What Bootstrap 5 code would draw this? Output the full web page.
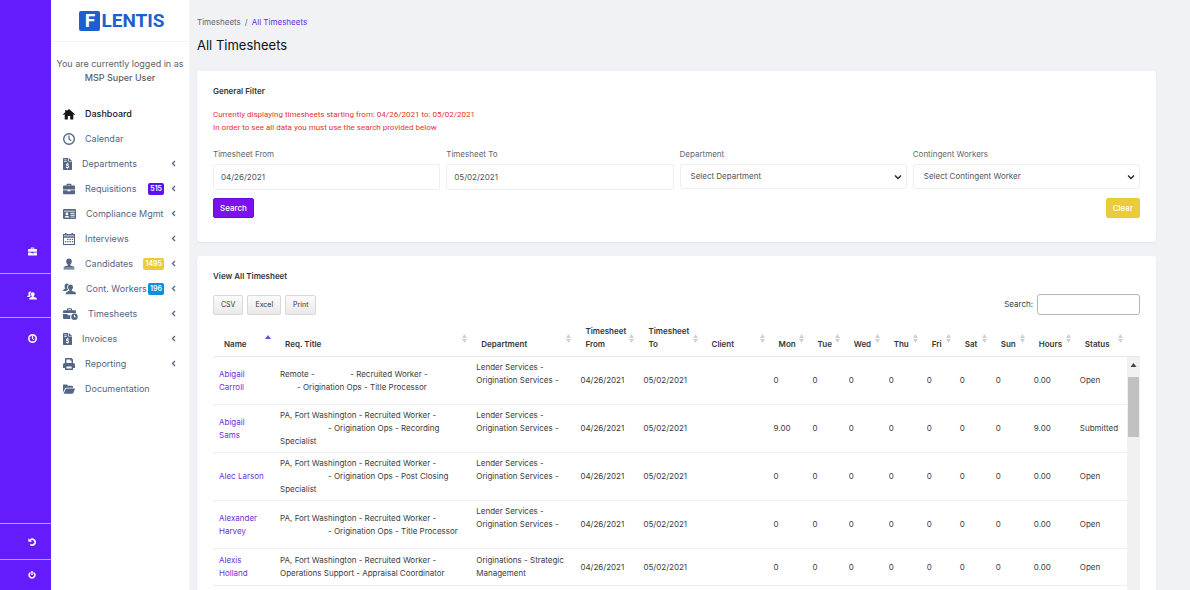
<!DOCTYPE html>
<html lang="en">
<head>
<meta charset="utf-8">
<meta name="viewport" content="width=device-width, initial-scale=1">
<title>All Timesheets - Flentis</title>
<link rel="stylesheet" href="https://cdn.jsdelivr.net/npm/bootstrap@5.3.0/dist/css/bootstrap.min.css">
<style>
  :root { --violet: #641cfc; --slate: #556684; --canvas: #f0f2f6; --rule: #eceef0; }
  body { font-family: Inter, Roboto, sans-serif; font-size: 8px; line-height: 13px; color: #3c4043; background: var(--canvas); }
  a { text-decoration: none; }
  svg { display: block; fill: currentColor; flex: none; }

  /* Narrow icon rail */
  .rail { width: 51px; background: var(--violet); padding-top: 39vh; }
  .rail a { height: 44px; padding-left: 13px; color: #fdf6ff; border-bottom: 1px solid #b79bff; }
  .rail .rail-last { height: 40px; border-bottom: 0; }
  .rail .rail-end { border-top: 1px solid #b79bff; }
  .rail .rail-end a { height: 36px; }
  .rail .rail-end a:last-child { height: 30px; border-bottom: 0; }

  /* Main menu */
  .sidebar { width: 138px; background: #fff; }
  .logo { height: 42px; padding-left: 4px; border-bottom: 1px solid #f1f3f7; color: #1c5fd0; font-family: Roboto, sans-serif; font-size: 19px; line-height: 20px; font-weight: 700; }
  .logo-box { width: 21px; height: 20px; border-radius: 2px; background: #1c5fd0; color: #fff; margin-right: 1px; }
  .whoami { font-size: 9px; line-height: 14px; padding-top: 15px; color: #5d6168; }
  .whoami strong { font-weight: 500; }
  .menu a { height: 25px; padding: 0 13px 0 12px; font-size: 9px; color: var(--slate); white-space: nowrap; }
  .menu a > svg:first-child { margin-right: 10px; }
  .menu a.current { color: #15171a; font-weight: 500; }
  .menu .chev { width: 5px; height: 7px; }
  .count { font-size: 7px; line-height: 12px; padding: 0 2px; border-radius: 2px; color: #fff; font-weight: 600; margin: 0 7px 0 auto; }
  .count-violet { background: #5b12ee; }
  .count-gold { background: #eccb3a; }
  .count-blue { background: #0a8fd8; }

  /* Page */
  .page { padding: 16px 34px 0 8px; }
  .crumbs { --bs-breadcrumb-margin-bottom: 0; --bs-breadcrumb-item-padding-x: 4px; --bs-breadcrumb-font-size: 8px; color: #63676d; }
  .crumbs a { color: #6a2bd9; }
  .page-title { font-size: 13px; line-height: 20px; font-weight: 400; color: #111; margin: 6px 0 16px; }
  .panel { background: #fff; border-radius: 3px; box-shadow: 0 1px 2px #dfe3ea; padding: 14px 16px; margin-bottom: 14px; }
  .panel h2 { font-size: 8px; line-height: 13px; font-weight: 600; color: #34373b; margin: 0; }
  .notice { font-family: Roboto, sans-serif; color: #e8322f; margin: 10px 0 14px; }
  .filters { --bs-gutter-x: 6px; }
  .filters label { margin-bottom: 3px; color: #63676d; }
  .filters .form-control, .filters .form-select { font-size: 8px; line-height: 13px; color: #50555b; border-color: #eceef1; border-radius: 2px; padding: 0 7px; height: 26px; }
  .filters .form-select { height: 25px; padding-left: 10px; border-radius: 3px; background-position: right 4px center; background-size: 8px 8px;
    background-image: url("data:image/svg+xml,%3csvg xmlns='http://www.w3.org/2000/svg' viewBox='0 0 8 8'%3e%3cpath fill='none' stroke='%23222' stroke-width='1.3' d='M1 2.5l3 3 3-3'/%3e%3c/svg%3e"); }
  .form-end { padding-bottom: 10px; }
  .act { font-size: 8px; line-height: 18px; padding: 0 6px; border-radius: 2px; font-weight: 500; color: #fff; }
  .act-go { background: #7a12ee; border-color: #6a0bd8; }
  .act-clear { background: #eccb3a; border-color: #eccb3a; }
  .tools { margin-top: 11px; }
  .export { font-size: 7px; line-height: 18px; padding: 0 7px; border-radius: 2px; border-color: #d8d8d8; color: #333; background: linear-gradient(#fbfbfb, #e9e9e9); }
  .lookup input { width: 103px; height: 21px; padding: 0 5px; font-size: 8px; border: 1px solid #b4b6b8; border-radius: 3px; }

  /* Timesheet grid */
  .grid-head { margin-top: 10px; padding-right: 13px; border-bottom: 1px solid #e6e8eb; }
  .grid-body { min-height: 300px; }
  .sheet { width: 100%; table-layout: fixed; }
  .sheet th { position: relative; vertical-align: bottom; font-weight: 600; color: #34373b; padding: 0 0 5px 10px; }
  .sheet th:first-child { padding-left: 11px; }
  .sheet th svg { position: absolute; right: 4px; bottom: 13px; color: #cfd2d8; }
  .sheet th svg.asc { color: #5a55d6; bottom: 17px; }
  .sheet td { height: 37px; padding: 4px 0 4px 5px; vertical-align: middle; border-bottom: 1px solid var(--rule); color: #393d42; white-space: nowrap; }
  .sheet td:first-child { padding-left: 6px; white-space: normal; }
  .sheet td a { color: #6d2fd8; }
  .gap-a { display: inline-block; width: 31px; }
  .gap-b { display: inline-block; width: 17px; }
  .gap-c { display: inline-block; width: 48px; }
  .track { width: 13px; flex: none; background: #f1f1f1; }
  .track svg { margin: 6px auto 10px; color: #444; }
  .thumb { height: 60px; margin: 0 1px; background: #c1c1c1; }
  .c-name { width: 62px } .c-req { width: 196px } .c-dept { width: 104px } .c-date { width: 63px } .c-client { width: 67px }
  .c-d1 { width: 39px } .c-d2 { width: 36px } .c-d3 { width: 40px } .c-d4 { width: 38px } .c-d5 { width: 33px }
  .c-hours { width: 46px } .c-status { width: 52px }
</style>
</head>
<body>
<svg class="d-none" aria-hidden="true">
  <symbol id="i-case" viewBox="0 0 12 12"><path d="M3.600 2.600V1.400Q3.600.8 4.200.8h3.600q.6 0 .6.6v1.200H11q1 0 1 1V6.400H0V3.600q0-1 1-1zM4.800 1.900v.7h2.400v-.7zM0 7.200h4.500v1h3v-1H12v3.300q0 .8-.8.800H.8q-.8 0-.8-.8z"/></symbol>
  <symbol id="i-clock" viewBox="0 0 12 12"><path fill-rule="evenodd" d="M6 0a6 6 0 1 1 0 12A6 6 0 0 1 6 0zm0 1.400a4.600 4.600 0 1 0 0 9.200 4.600 4.600 0 0 0 0-9.200zM5.400 2.600h1.200v3l1.900 1.900-.8.8-2.300-2.200z"/></symbol>
  <symbol id="i-clock-bold" viewBox="0 0 12 12"><path fill-rule="evenodd" d="M6 0a6 6 0 1 1 0 12A6 6 0 0 1 6 0zm0 2.200a3.800 3.800 0 1 0 0 7.600 3.800 3.800 0 0 0 0-7.600zM5.200 2.800h1.600v2.700l1.700 1.700-1.100 1.100-2.200-2.200z"/></symbol>
  <symbol id="i-home" viewBox="0 0 12 12"><path d="M6 1l6 5.200-.8.9-.9-.8v5.200H7.200V8H4.800v3.500H1.700V6.300l-.9.8L0 6.200 2.200 4.300V2h1.500v1z"/></symbol>
  <symbol id="i-file" viewBox="0 0 9 12"><path fill-rule="evenodd" d="M.7 0H5.300v3.600H9v7.700q0 .7-.7.700H.7Q0 12 0 11.300V.7Q0 0 .7 0zM6 0l3 3H6zM1.200 1.500v.7h2.500v-.7zM1.200 3v.7h2.500V3zM4.200 4.800v.7q-1.400.2-1.300 1.400.1.900 1.900 1.300.5.400 0 .7-.7.200-1.400-.3l-.6.800q.7.500 1.400.5v.8h.8v-.8q1.400-.3 1.200-1.500-.2-.8-1.900-1.300-.4-.4.100-.6.500-.1 1.200.3l.5-.8q-.6-.4-1.100-.5v-.7z"/></symbol>
  <symbol id="i-card" viewBox="0 0 13 12"><path fill-rule="evenodd" d="M1 1h11q1 0 1 1v8q0 1-1 1H1q-1 0-1-1V2q0-1 1-1zm0 1.800v.7h11v-.7zM3.900 4.500a1.400 1.400 0 1 0 0 2.800 1.400 1.400 0 0 0 0-2.800zM1.500 9.600h4.800Q6.200 8 4.800 8H3.100Q1.600 8 1.500 9.600zM7.500 4.800v1h4.200v-1zm0 2v1h4.200v-1zm0 1.900v.9h4.200v-.9z"/></symbol>
  <symbol id="i-cal" viewBox="0 0 12 12"><path fill-rule="evenodd" d="M0 1h2V0h1.500v1h5V0H10v1h2v11H0zm1 3.800V11h10V4.800zM1 2.500v.8h10v-.8zM4.200 5.700h1.300V7H4.200zm2.300 0h1.300V7H6.500zm2.300 0h1.300V7H8.800zM2 8h1.300v1.300H2zm2.200 0h1.300v1.300H4.200zm2.300 0h1.300v1.300H6.500zm2.300 0h1.300v1.300H8.800z"/></symbol>
  <symbol id="i-user" viewBox="0 0 12 12"><path d="M6 .5c1.900 0 2.800 1.200 2.800 2.900 0 1.400-.7 2.500-1.500 3.100v.9l3.300 1.100q.8.400.8 1.300H.6q0-.9.8-1.300l3.300-1.100v-.9C3.900 5.900 3.200 4.800 3.200 3.400 3.200 1.700 4.100.5 6 .5zM.6 10.300h10.800v1.200H.6z"/></symbol>
  <symbol id="i-users" viewBox="0 0 13 12"><path d="M7.500 1.500c1.700 0 2.500 1.100 2.500 2.600 0 1.300-.6 2.200-1.300 2.800v.9l3.300 1.200q1 .5 1 1.700v.6H2.700v-.8q0-1 1-1.500l2.600-1.200v-.9C5.600 6.300 5 5.400 5 4.100c0-1.500.8-2.600 2.500-2.600zM4 .5q1.300 0 1.900.8C4.400 2 4 3.200 4.200 4.500c0 .9.400 1.700.8 2.200L3.100 8H0q0-1.400.9-1.800l1.500-.7C1.800 5 1.600 4.300 1.600 3.200 1.600 1.500 2.500.5 4 .5z"/></symbol>
  <symbol id="i-time" viewBox="0 0 15 12"><path fill-rule="evenodd" d="M4 2.200V1q0-.8.800-.8h3.400q.8 0 .8.800v1.200h3q1 0 1 1V5H0V3.200q0-1 1-1zM5.200 1.300v.9h2.600v-.9zM0 6h4.500v1.200H7.600Q6.800 8.800 7.500 11H1q-1 0-1-1zM11.500 5.600a3.200 3.200 0 1 1 0 6.400 3.200 3.200 0 0 1 0-6.400zm-.5 1.500v2.200h2v-.8h-1.100V7.100z"/></symbol>
  <symbol id="i-print" viewBox="0 0 12 12"><path fill-rule="evenodd" d="M2.500 0h6L10 1.500V5q2 0 2 1.600V10h-2v2H2V10H0V6.600Q0 5 2 5V.5zM3.400 1.400V5h5.200V2.700H7.400V1.400zM3.400 8.600v2h5.200v-2z"/></symbol>
  <symbol id="i-folder" viewBox="0 0 12 12"><path d="M0 9.500V2.300q0-.8.800-.8h3L5 2.800h4.200q.8 0 .8.800v1.100H3.100q-.7 0-1.100.7zM.5 10.800L2.600 6.200q.3-.6.900-.6h8q.7 0 .4.700L10.300 10q-.3.800-1.100.8z"/></symbol>
  <symbol id="i-undo" viewBox="0 0 12 12"><path d="M.5.5l2 1.800A5.600 5.600 0 1 1 2.600 10.500l1.700-2a3 3 0 1 0 0-4.400L6.200 5.800H.5z"/></symbol>
  <symbol id="i-power" viewBox="0 0 12 12"><path d="M4.900 0h2.200v6H4.900zM3.800 1v2.900a3 3 0 1 0 4.400 0V1a5.500 5.500 0 1 1-4.400 0z"/></symbol>
  <symbol id="i-chev" viewBox="0 0 5 7"><path fill="none" stroke="currentColor" stroke-width="1.300" d="M4 1L1.500 3.500 4 6"/></symbol>
  <symbol id="i-sort" viewBox="0 0 5 9"><path d="M2.500 0L5 4H0zM2.500 9L0 5h5z"/></symbol>
  <symbol id="i-up" viewBox="0 0 6 4"><path d="M3 0l3 4H0z"/></symbol>
</svg>

<div class="d-flex vh-100 overflow-hidden">
  <nav class="rail d-flex flex-column flex-shrink-0" aria-label="Shortcuts">
    <a href="#" class="d-flex align-items-center justify-content-center" aria-label="Requisitions"><svg width="9" height="9"><use href="#i-case"/></svg></a>
    <a href="#" class="d-flex align-items-center justify-content-center" aria-label="Workers"><svg width="10" height="9"><use href="#i-users"/></svg></a>
    <a href="#" class="rail-last d-flex align-items-center justify-content-center" aria-label="Timesheets"><svg width="9" height="9"><use href="#i-clock-bold"/></svg></a>
    <div class="rail-end mt-auto">
      <a href="#" class="d-flex align-items-center justify-content-center" aria-label="History"><svg width="8" height="8"><use href="#i-undo"/></svg></a>
      <a href="#" class="d-flex align-items-center justify-content-center" aria-label="Log out"><svg width="8" height="8"><use href="#i-power"/></svg></a>
    </div>
  </nav>

  <aside class="sidebar flex-shrink-0">
    <a href="#" class="logo d-flex align-items-center justify-content-center" aria-label="Flentis"><span class="logo-box text-center">F</span>LENTIS</a>
    <p class="whoami text-center text-nowrap mb-0">You are currently logged in as<br><strong>MSP Super User</strong></p>
    <nav class="menu mt-3" aria-label="Main">
      <a href="#" class="current d-flex align-items-center"><svg width="12" height="12"><use href="#i-home"/></svg>Dashboard</a>
      <a href="#" class="d-flex align-items-center"><svg width="12" height="12"><use href="#i-clock"/></svg>Calendar</a>
      <a href="#" class="d-flex align-items-center"><svg width="9" height="12"><use href="#i-file"/></svg>Departments<svg class="chev ms-auto"><use href="#i-chev"/></svg></a>
      <a href="#" class="d-flex align-items-center"><svg width="12" height="12"><use href="#i-case"/></svg>Requisitions<span class="count count-violet">515</span><svg class="chev"><use href="#i-chev"/></svg></a>
      <a href="#" class="d-flex align-items-center"><svg width="13" height="12"><use href="#i-card"/></svg>Compliance Mgmt<svg class="chev ms-auto"><use href="#i-chev"/></svg></a>
      <a href="#" class="d-flex align-items-center"><svg width="12" height="12"><use href="#i-cal"/></svg>Interviews<svg class="chev ms-auto"><use href="#i-chev"/></svg></a>
      <a href="#" class="d-flex align-items-center"><svg width="12" height="12"><use href="#i-user"/></svg>Candidates<span class="count count-gold">1495</span><svg class="chev"><use href="#i-chev"/></svg></a>
      <a href="#" class="d-flex align-items-center"><svg width="13" height="12"><use href="#i-users"/></svg>Cont. Workers<span class="count count-blue">196</span><svg class="chev"><use href="#i-chev"/></svg></a>
      <a href="#" class="d-flex align-items-center"><svg width="15" height="12"><use href="#i-time"/></svg>Timesheets<svg class="chev ms-auto"><use href="#i-chev"/></svg></a>
      <a href="#" class="d-flex align-items-center"><svg width="9" height="12"><use href="#i-file"/></svg>Invoices<svg class="chev ms-auto"><use href="#i-chev"/></svg></a>
      <a href="#" class="d-flex align-items-center"><svg width="12" height="12"><use href="#i-print"/></svg>Reporting<svg class="chev ms-auto"><use href="#i-chev"/></svg></a>
      <a href="#" class="d-flex align-items-center"><svg width="12" height="12"><use href="#i-folder"/></svg>Documentation</a>
    </nav>
  </aside>

  <main class="page flex-grow-1">
    <nav aria-label="breadcrumb">
      <ol class="breadcrumb crumbs">
        <li class="breadcrumb-item">Timesheets</li>
        <li class="breadcrumb-item"><a href="#">All Timesheets</a></li>
      </ol>
    </nav>
    <h1 class="page-title">All Timesheets</h1>

    <section class="panel">
      <h2>General Filter</h2>
      <p class="notice">Currently displaying timesheets starting from: 04/26/2021 to: 05/02/2021<br>In order to see all data you must use the search provided below</p>
      <form>
        <div class="row filters">
          <div class="col-3"><label class="d-block" for="from">Timesheet From</label><input id="from" class="form-control" type="text" value="04/26/2021"></div>
          <div class="col-3"><label class="d-block" for="to">Timesheet To</label><input id="to" class="form-control" type="text" value="05/02/2021"></div>
          <div class="col-3"><label class="d-block" for="dept">Department</label><select id="dept" class="form-select"><option>Select Department</option></select></div>
          <div class="col-3"><label class="d-block" for="worker">Contingent Workers</label><select id="worker" class="form-select"><option>Select Contingent Worker</option></select></div>
        </div>
        <div class="form-end d-flex justify-content-between mt-2">
          <button type="button" class="btn act act-go">Search</button>
          <button type="reset" class="btn act act-clear">Clear</button>
        </div>
      </form>
    </section>

    <section class="panel">
      <h2>View All Timesheet</h2>
      <div class="tools d-flex align-items-center">
        <div class="d-flex gap-1">
          <button type="button" class="btn export">CSV</button>
          <button type="button" class="btn export">Excel</button>
          <button type="button" class="btn export">Print</button>
        </div>
        <div class="lookup ms-auto d-flex align-items-center"><label for="find" class="me-1">Search:</label><input id="find" type="search"></div>
      </div>

      <div class="grid-head">
        <table class="sheet">
          <colgroup><col class="c-name"><col class="c-req"><col class="c-dept"><col class="c-date"><col class="c-date"><col class="c-client"><col class="c-d1"><col class="c-d2"><col class="c-d3"><col class="c-d4"><col class="c-d5"><col class="c-d2"><col class="c-d4"><col class="c-hours"><col class="c-status"></colgroup>
          <thead><tr>
            <th>Name<svg class="asc" width="6" height="4"><use href="#i-up"/></svg></th>
            <th>Req. Title<svg width="5" height="9"><use href="#i-sort"/></svg></th>
            <th>Department<svg width="5" height="9"><use href="#i-sort"/></svg></th>
            <th>Timesheet<br>From<svg width="5" height="9"><use href="#i-sort"/></svg></th>
            <th>Timesheet<br>To<svg width="5" height="9"><use href="#i-sort"/></svg></th>
            <th>Client<svg width="5" height="9"><use href="#i-sort"/></svg></th>
            <th>Mon<svg width="5" height="9"><use href="#i-sort"/></svg></th>
            <th>Tue<svg width="5" height="9"><use href="#i-sort"/></svg></th>
            <th>Wed<svg width="5" height="9"><use href="#i-sort"/></svg></th>
            <th>Thu<svg width="5" height="9"><use href="#i-sort"/></svg></th>
            <th>Fri<svg width="5" height="9"><use href="#i-sort"/></svg></th>
            <th>Sat<svg width="5" height="9"><use href="#i-sort"/></svg></th>
            <th>Sun<svg width="5" height="9"><use href="#i-sort"/></svg></th>
            <th>Hours<svg width="5" height="9"><use href="#i-sort"/></svg></th>
            <th>Status<svg width="5" height="9"><use href="#i-sort"/></svg></th>
          </tr></thead>
        </table>
      </div>
      <div class="grid-body d-flex">
        <table class="sheet align-self-start">
          <colgroup><col class="c-name"><col class="c-req"><col class="c-dept"><col class="c-date"><col class="c-date"><col class="c-client"><col class="c-d1"><col class="c-d2"><col class="c-d3"><col class="c-d4"><col class="c-d5"><col class="c-d2"><col class="c-d4"><col class="c-hours"><col class="c-status"></colgroup>
          <tbody>
            <tr><td><a href="#">Abigail<br>Carroll</a></td><td>Remote - <span class="gap-a"></span> - Recruited Worker -<br><span class="gap-b"></span>- Origination Ops - Title Processor</td><td>Lender Services -<br>Origination Services -<br>&nbsp;</td><td>04/26/2021</td><td>05/02/2021</td><td></td><td>0</td><td>0</td><td>0</td><td>0</td><td>0</td><td>0</td><td>0</td><td>0.00</td><td>Open</td></tr>
            <tr><td><a href="#">Abigail<br>Sams</a></td><td>PA, Fort Washington - Recruited Worker -<br><span class="gap-c"></span>- Origination Ops - Recording<br>Specialist</td><td>Lender Services -<br>Origination Services -<br>&nbsp;</td><td>04/26/2021</td><td>05/02/2021</td><td></td><td>9.00</td><td>0</td><td>0</td><td>0</td><td>0</td><td>0</td><td>0</td><td>9.00</td><td>Submitted</td></tr>
            <tr><td><a href="#">Alec Larson</a></td><td>PA, Fort Washington - Recruited Worker -<br><span class="gap-c"></span>- Origination Ops - Post Closing<br>Specialist</td><td>Lender Services -<br>Origination Services -<br>&nbsp;</td><td>04/26/2021</td><td>05/02/2021</td><td></td><td>0</td><td>0</td><td>0</td><td>0</td><td>0</td><td>0</td><td>0</td><td>0.00</td><td>Open</td></tr>
            <tr><td><a href="#">Alexander<br>Harvey</a></td><td>PA, Fort Washington - Recruited Worker -<br><span class="gap-c"></span>- Origination Ops - Title Processor</td><td>Lender Services -<br>Origination Services -<br>&nbsp;</td><td>04/26/2021</td><td>05/02/2021</td><td></td><td>0</td><td>0</td><td>0</td><td>0</td><td>0</td><td>0</td><td>0</td><td>0.00</td><td>Open</td></tr>
            <tr><td><a href="#">Alexis<br>Holland</a></td><td>PA, Fort Washington - Recruited Worker -<br>Operations Support - Appraisal Coordinator</td><td>Originations - Strategic<br>Management</td><td>04/26/2021</td><td>05/02/2021</td><td></td><td>0</td><td>0</td><td>0</td><td>0</td><td>0</td><td>0</td><td>0</td><td>0.00</td><td>Open</td></tr>
          </tbody>
        </table>
        <div class="track"><svg width="7" height="4"><use href="#i-up"/></svg><div class="thumb"></div></div>
      </div>
    </section>
  </main>
</div>
<script src="https://cdn.jsdelivr.net/npm/bootstrap@5.3.0/dist/js/bootstrap.bundle.min.js"></script>
</body>
</html>
